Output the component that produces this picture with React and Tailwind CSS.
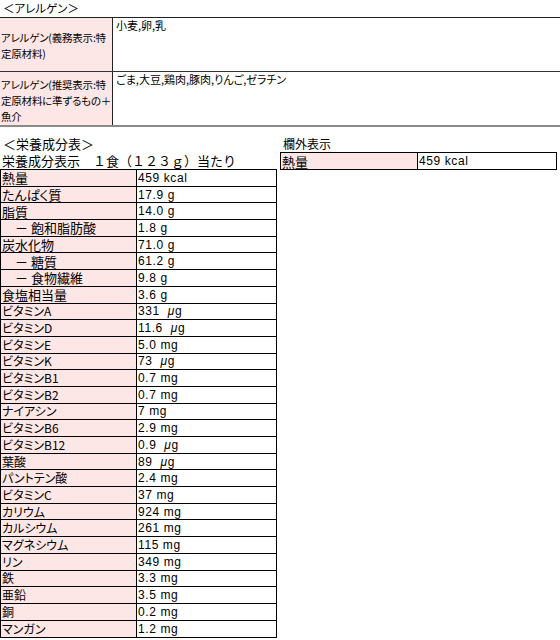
import React from "react";

const nutrients = [
  ["熱量", "459 kcal", true],
  ["たんぱく質", "17.9 g", true],
  ["脂質", "14.0 g", true],
  ["　－ 飽和脂肪酸", "1.8 g", true],
  ["炭水化物", "71.0 g", true],
  ["　－ 糖質", "61.2 g", true],
  ["　－ 食物繊維", "9.8 g", true],
  ["食塩相当量", "3.6 g", true],
  ["ビタミンA", "331 μg"],
  ["ビタミンD", "11.6 μg"],
  ["ビタミンE", "5.0 mg"],
  ["ビタミンK", "73 μg"],
  ["ビタミンB1", "0.7 mg"],
  ["ビタミンB2", "0.7 mg"],
  ["ナイアシン", "7 mg"],
  ["ビタミンB6", "2.9 mg"],
  ["ビタミンB12", "0.9 μg"],
  ["葉酸", "89 μg"],
  ["パントテン酸", "2.4 mg"],
  ["ビタミンC", "37 mg"],
  ["カリウム", "924 mg"],
  ["カルシウム", "261 mg"],
  ["マグネシウム", "115 mg"],
  ["リン", "349 mg"],
  ["鉄", "3.3 mg"],
  ["亜鉛", "3.5 mg"],
  ["銅", "0.2 mg"],
  ["マンガン", "1.2 mg"],
];

const Value = ({ text }) => {
  const [num, unit] = text.split(" ");
  return (
    <span className="whitespace-pre font-['Liberation_Sans',sans-serif] text-[12px] leading-none tracking-[0.6px]">
      {num}
      {unit.startsWith("μ") ? (
        <>
          {"  "}
          <span className="italic">μ</span>
          {unit.slice(1)}
        </>
      ) : (
        " " + unit
      )}
    </span>
  );
};

export default function App() {
  return (
    <div className="w-[560px] h-[640px] overflow-hidden bg-white text-black font-['Noto_Sans_CJK_JP',sans-serif] [font-feature-settings:'palt']">
      <div className="h-[17px] pl-[3px] text-[11.5px] leading-[17px]">＜アレルゲン＞</div>
      <div className="border-t border-[#222] border-b-2 border-b-[#8a8a8a]">
        <div className="flex h-[54px] border-b border-[#333]">
          <div className="flex w-[113px] items-center overflow-hidden whitespace-nowrap border-r border-[#222] bg-[#fde6e6] pl-[1px] pt-[2px] text-[10.5px] leading-[16px] tracking-[-0.2px]">
            <span>
              アレルゲン(義務表示:特
              <br />
              定原材料)
            </span>
          </div>
          <div className="flex-1 pl-[3px] text-[11px] leading-[15px]">小麦,卵,乳</div>
        </div>
        <div className="flex h-[53px]">
          <div className="flex w-[113px] items-center overflow-hidden whitespace-nowrap border-r border-[#222] bg-[#fde6e6] pl-[1px] pt-[4px] text-[10.5px] leading-[16px] tracking-[-0.2px]">
            <span>
              アレルゲン(推奨表示:特
              <br />
              定原材料に準ずるもの＋
              <br />
              魚介
            </span>
          </div>
          <div className="flex-1 pl-[3px] text-[11px] leading-[15px]">ごま,大豆,鶏肉,豚肉,りんご,ゼラチン</div>
        </div>
      </div>

      <div className="mt-[8px] flex">
        <div className="w-[277px]">
          <div className="h-[17px] pl-[3px] text-[13px] leading-[17px]">＜栄養成分表＞</div>
          <div className="h-[17px] pl-[2px] text-[13px] leading-[17px] [font-feature-settings:normal]">
            栄養成分表示　１食（１２３ｇ）当たり
          </div>
          <div className="border border-black">
            {nutrients.map(([label, value, big], i) => (
              <div
                key={label}
                className={`flex h-[16.7px] ${i < nutrients.length - 1 ? "border-b border-black" : ""}`}
              >
                <div
                  className={`flex w-[136px] items-center border-r border-black bg-[#fde6e6] pl-[1px] leading-none ${
                    big ? "text-[13px]" : "text-[12px]"
                  }`}
                >
                  {label}
                </div>
                <div className="flex flex-1 items-center pl-[1px]">
                  <Value text={value} />
                </div>
              </div>
            ))}
          </div>
        </div>

        <div className="ml-[3px] w-[277px]">
          <div className="h-[17px] pl-[3px] text-[12px] leading-[17px]">欄外表示</div>
          <div className="flex h-[18px] border border-black">
            <div className="flex w-[137px] items-center border-r border-black bg-[#fde6e6] pl-[1px] text-[13px] leading-none">熱量</div>
            <div className="flex flex-1 items-center pl-[1px]">
              <Value text="459 kcal" />
            </div>
          </div>
        </div>
      </div>
    </div>
  );
}
